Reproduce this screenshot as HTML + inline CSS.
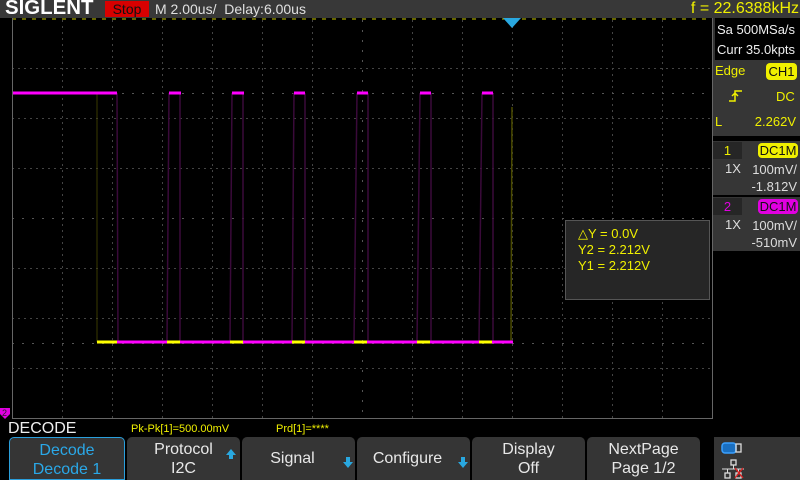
<!DOCTYPE html>
<html><head><meta charset="utf-8"><style>
*{margin:0;padding:0;box-sizing:border-box}
body{width:800px;height:480px;background:#000;position:relative;overflow:hidden;font-family:"Liberation Sans",sans-serif}
.a{position:absolute;white-space:nowrap}
.btn{position:absolute;top:437px;height:43px;width:113px;background:#353535;border-radius:5px 5px 0 0;color:#e8e8e8;font-size:16px;text-align:center;line-height:19px;padding-top:3px}
.y{color:#f0f000}
</style></head><body>
<div class="a" style="left:0;top:0;width:800px;height:18px;background:#383838"></div>
<div class="a" style="left:5px;top:-3px;font-size:20px;font-weight:bold;color:#fff;transform:scaleX(1.02);transform-origin:left">SIGLENT</div>
<div class="a" style="left:105px;top:1px;width:44px;height:16px;background:#d80000;color:#111;font-size:14px;line-height:16px;text-align:center">Stop</div>
<div class="a" style="left:155px;top:0px;font-size:14px;color:#e0e0e0;line-height:18px">M 2.00us/&nbsp; Delay:6.00us</div>
<div class="a y" style="right:1px;top:-1px;font-size:16px;line-height:20px">f = 22.6388kHz</div>

<svg class="a" style="left:0;top:0" width="800" height="480">
<line x1="12" y1="19" x2="712" y2="19" stroke="#c8c800" stroke-dasharray="4,6" stroke-width="1"/>
<g stroke="#444" stroke-width="1" stroke-dasharray="2,4">
<line x1="62.5" y1="20" x2="62.5" y2="418"/><line x1="112.5" y1="20" x2="112.5" y2="418"/><line x1="162.5" y1="20" x2="162.5" y2="418"/><line x1="212.5" y1="20" x2="212.5" y2="418"/><line x1="262.5" y1="20" x2="262.5" y2="418"/><line x1="312.5" y1="20" x2="312.5" y2="418"/><line x1="412.5" y1="20" x2="412.5" y2="418"/><line x1="462.5" y1="20" x2="462.5" y2="418"/><line x1="512.5" y1="20" x2="512.5" y2="418"/><line x1="562.5" y1="20" x2="562.5" y2="418"/><line x1="612.5" y1="20" x2="612.5" y2="418"/><line x1="662.5" y1="20" x2="662.5" y2="418"/>
<line x1="12" y1="68.5" x2="712" y2="68.5"/><line x1="12" y1="118.5" x2="712" y2="118.5"/><line x1="12" y1="168.5" x2="712" y2="168.5"/><line x1="12" y1="268.5" x2="712" y2="268.5"/><line x1="12" y1="318.5" x2="712" y2="318.5"/><line x1="12" y1="368.5" x2="712" y2="368.5"/>
</g>
<g stroke="#555" stroke-width="1" stroke-dasharray="2,8">
<line x1="12" y1="218.5" x2="712" y2="218.5"/><line x1="362.5" y1="20" x2="362.5" y2="418"/>
<line x1="12" y1="93.5" x2="712" y2="93.5"/><line x1="12" y1="343.5" x2="712" y2="343.5"/>
</g>
<polyline points="12.5,18 12.5,418.5 712.5,418.5 712.5,18" fill="none" stroke="#666"/>
<g stroke="#3a0a3a" stroke-width="1.5" fill="none">
<line x1="117" y1="93" x2="118" y2="342"/>
<line x1="167" y1="342" x2="169" y2="93"/><line x1="180" y1="93" x2="180" y2="342"/>
<line x1="230" y1="342" x2="232" y2="93"/><line x1="243" y1="93" x2="243" y2="342"/>
<line x1="292" y1="342" x2="294" y2="93"/><line x1="305" y1="93" x2="305" y2="342"/>
<line x1="354" y1="342" x2="357" y2="93"/><line x1="368" y1="93" x2="368" y2="342"/>
<line x1="417" y1="342" x2="420" y2="93"/><line x1="431" y1="93" x2="431" y2="342"/>
<line x1="479" y1="342" x2="482" y2="93"/><line x1="493" y1="93" x2="493" y2="342"/>
</g>
<line x1="97" y1="93" x2="97" y2="342" stroke="#3a3a00" stroke-width="1"/>
<line x1="512" y1="107" x2="511" y2="342" stroke="#4a4a00" stroke-width="1.5"/>
<g stroke="#ff00ff" stroke-width="3">
<line x1="13" y1="93" x2="117" y2="93"/><line x1="169" y1="93" x2="181" y2="93"/><line x1="232" y1="93" x2="244" y2="93"/><line x1="294" y1="93" x2="305" y2="93"/><line x1="357" y1="93" x2="368" y2="93"/><line x1="420" y1="93" x2="431" y2="93"/><line x1="482" y1="93" x2="493" y2="93"/>
<line x1="97" y1="342" x2="513" y2="342"/>
</g>
<g stroke="#ffff00" stroke-width="3">
<line x1="97" y1="342" x2="117" y2="342"/><line x1="167" y1="342" x2="180" y2="342"/><line x1="230" y1="342" x2="243" y2="342"/><line x1="292" y1="342" x2="305" y2="342"/><line x1="354" y1="342" x2="367" y2="342"/><line x1="417" y1="342" x2="430" y2="342"/><line x1="479" y1="342" x2="492" y2="342"/>
</g>
<polygon points="503,18 521,18 512,28" fill="#29a8e0"/>
<polygon points="0,408 10,408 10,414 5,419 0,414" fill="#e000e0"/>
<text x="2" y="416" font-size="9" fill="#222" font-family="Liberation Sans">2</text>
</svg>

<div class="a" style="left:713px;top:18px;width:87px;height:42px;background:#000;border-left:2px solid #333"></div>
<div class="a" style="left:717px;top:20px;color:#eee;font-size:13px;line-height:20px">Sa 500MSa/s<br>Curr 35.0kpts</div>
<div class="a" style="left:713px;top:60px;width:87px;height:76px;background:#363636"></div>
<div class="a y" style="left:715px;top:63px;font-size:13px">Edge</div>
<div class="a" style="left:766px;top:63px;width:31px;height:17px;background:#f0f000;border-radius:4px;color:#111;font-size:13px;text-align:center;line-height:17px">CH1</div>
<svg class="a" style="left:726px;top:88px" width="20" height="16"><path d="M3 13 H9 V3 H16 M6 8 L9 5 L12 8" stroke="#f0f000" stroke-width="1.5" fill="none"/></svg>
<div class="a y" style="left:776px;top:89px;font-size:13px">DC</div>
<div class="a y" style="left:715px;top:114px;font-size:13px">L</div>
<div class="a y" style="right:4px;top:114px;font-size:13px">2.262V</div>
<div class="a" style="left:713px;top:141px;width:87px;height:54px;background:#363636"></div>
<div class="a" style="left:713px;top:142px;width:29px;height:17px;background:#262626;color:#f0f000;font-size:13px;text-align:center;line-height:17px">1</div>
<div class="a" style="left:758px;top:143px;width:40px;height:15px;background:#f0f000;border-radius:4px;color:#111;font-size:13px;text-align:center;line-height:15px">DC1M</div>
<div class="a" style="left:725px;top:161px;color:#ddd;font-size:13px">1X</div>
<div class="a" style="right:3px;top:161px;color:#ddd;font-size:13px;text-align:right;line-height:17px">100mV/<br>-1.812V</div>
<div class="a" style="left:713px;top:197px;width:87px;height:54px;background:#363636"></div>
<div class="a" style="left:713px;top:198px;width:29px;height:17px;background:#262626;color:#e000e0;font-size:13px;text-align:center;line-height:17px">2</div>
<div class="a" style="left:758px;top:199px;width:40px;height:15px;background:#e000e0;border-radius:4px;color:#111;font-size:13px;text-align:center;line-height:15px">DC1M</div>
<div class="a" style="left:725px;top:217px;color:#ddd;font-size:13px">1X</div>
<div class="a" style="right:3px;top:217px;color:#ddd;font-size:13px;text-align:right;line-height:17px">100mV/<br>-510mV</div>

<div class="a" style="left:565px;top:220px;width:145px;height:80px;background:#262626;border:1px solid #555"></div>
<div class="a y" style="left:578px;top:226px;font-size:13px;line-height:16px">△Y = 0.0V<br>Y2 = 2.212V<br>Y1 = 2.212V</div>

<div class="a" style="left:8px;top:420px;color:#eee;font-size:16px">DECODE</div>
<div class="a y" style="left:131px;top:423px;font-size:11px">Pk-Pk[1]=500.00mV</div>
<div class="a y" style="left:276px;top:423px;font-size:11px">Prd[1]=****</div>
<div class="btn" style="left:9px;width:116px;border:1px solid #2a9fdc;color:#2aa8e8">Decode<br>Decode 1</div>
<div class="btn" style="left:127px;width:113px">Protocol<br>I2C</div>
<div class="btn" style="left:242px;width:113px;line-height:43px;padding:0;text-indent:-12px">Signal</div>
<div class="btn" style="left:357px;width:113px;line-height:43px;padding:0;text-indent:-12px">Configure</div>
<div class="btn" style="left:472px;width:113px">Display<br>Off</div>
<div class="btn" style="left:587px;width:113px">NextPage<br>Page 1/2</div>
<svg class="a" style="left:0;top:430px" width="480" height="50">
<g fill="#29a8e0">
<polygon points="226,25 236,25 231,19"/><rect x="229" y="25" width="4" height="4"/>
<polygon points="343,32 353,32 348,38"/><rect x="346" y="27" width="4" height="5"/>
<polygon points="458,32 468,32 463,38"/><rect x="461" y="27" width="4" height="5"/>
</g>
</svg>
<div class="a" style="left:714px;top:437px;width:86px;height:43px;background:#353535"></div>
<svg class="a" style="left:718px;top:440px" width="40" height="40">
<rect x="4" y="3" width="14" height="10" rx="3" fill="#1a6fc0" stroke="#3aa0ff" stroke-width="1.5"/>
<rect x="18" y="4" width="5" height="8" fill="none" stroke="#ddd" stroke-width="1.3"/>
<rect x="13" y="20" width="5" height="5" fill="none" stroke="#ddd" stroke-width="1.3"/>
<line x1="15.5" y1="25" x2="15.5" y2="29" stroke="#ddd"/><line x1="4" y1="29" x2="26" y2="29" stroke="#ddd"/>
<line x1="9.5" y1="29" x2="9.5" y2="33" stroke="#ddd"/><rect x="7" y="33" width="5" height="5" fill="none" stroke="#ddd" stroke-width="1.3"/>
<line x1="20.5" y1="29" x2="20.5" y2="33" stroke="#ddd"/><rect x="18" y="33" width="5" height="5" fill="none" stroke="#ddd" stroke-width="1.3"/>
<line x1="17" y1="28" x2="25" y2="38" stroke="#e02020" stroke-width="1.3"/><line x1="25" y1="28" x2="17" y2="38" stroke="#e02020" stroke-width="1.3"/>
</svg>
</body></html>
